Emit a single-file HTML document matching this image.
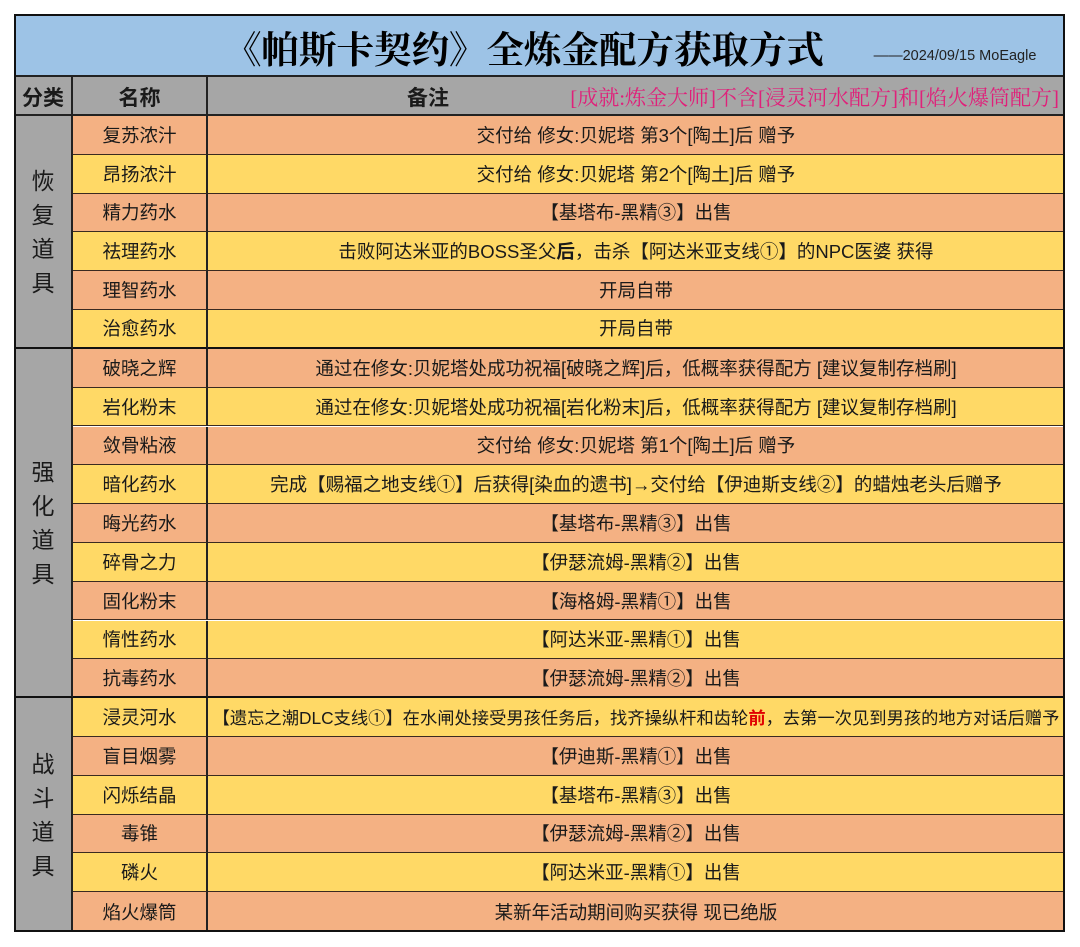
<!DOCTYPE html>
<html><head><meta charset="utf-8"><style>
body{margin:0;width:1080px;height:947px;background:#fff;position:relative;overflow:hidden;font-family:"Liberation Sans","Microsoft YaHei","Noto Sans CJK SC",sans-serif;}
.c{position:absolute;box-sizing:border-box;display:flex;align-items:center;justify-content:center;font-size:18.5px;color:#1a1a1a;white-space:nowrap;}
.n{font-size:18.5px}
.o{background:#F4B183}.y{background:#FFD966}
.frame{position:absolute;left:14px;top:14px;width:1051px;height:918px;border:2px solid #111;box-sizing:border-box;pointer-events:none}
.cat{font-size:23px;line-height:34px;white-space:normal;text-align:center;padding:0 17px}
</style></head><body>
<div class="c" style="left:15px;top:15px;width:1049px;height:62px;background:#9DC3E6;border-bottom:2px solid #222"></div>
<div class="c" style="left:224px;top:18px;width:620px;height:58px;font-family:'Liberation Serif','Noto Serif CJK SC',serif;font-weight:bold;font-size:37.5px;color:#000;justify-content:flex-start">《帕斯卡契约》全炼金配方获取方式</div>
<div class="c" style="left:865px;top:44px;width:180px;height:24px;font-size:14.5px;color:#222">——2024/09/15 MoEagle</div>
<div class="c" style="left:15px;top:77px;width:1049px;height:39px;background:#A6A6A6;border-bottom:2px solid #222"></div>
<div class="c" style="left:15px;top:77px;width:58px;height:39px;font-weight:bold;font-size:21px;border-right:2px solid #222">分类</div>
<div class="c" style="left:73px;top:77px;width:135px;height:39px;font-weight:bold;font-size:21px;border-right:2px solid #222">名称</div>
<div class="c" style="left:208px;top:77px;width:440px;height:39px;font-weight:bold;font-size:21px">备注</div>
<div class="c" style="left:500px;top:77px;width:559px;height:39px;font-size:21px;color:#E0207A;font-family:'Liberation Serif','Noto Serif CJK SC',serif;justify-content:flex-end">[成就:炼金大师]不含[浸灵河水配方]和[焰火爆筒配方]</div>
<div id="rows"></div>
<div class="c cat" style="left:15px;top:116px;width:58px;height:233px;background:#A6A6A6;border-right:2px solid #222;border-bottom:2px solid #111">恢复道具</div>
<div class="c cat" style="left:15px;top:349px;width:58px;height:349px;background:#A6A6A6;border-right:2px solid #222;border-bottom:2px solid #111">强化道具</div>
<div class="c cat" style="left:15px;top:698px;width:58px;height:233px;background:#A6A6A6;border-right:2px solid #222">战斗道具</div>
<div class="frame"></div>
<script>
var d=[
["复苏浓汁","交付给 修女:贝妮塔 第3个[陶土]后 赠予"],
["昂扬浓汁","交付给 修女:贝妮塔 第2个[陶土]后 赠予"],
["精力药水","【基塔布-黑精③】出售"],
["祛理药水","击败阿达米亚的BOSS圣父<b>后</b>，击杀【阿达米亚支线①】的NPC医婆 获得"],
["理智药水","开局自带"],
["治愈药水","开局自带"],
["破晓之辉","通过在修女:贝妮塔处成功祝福[破晓之辉]后，低概率获得配方 [建议复制存档刷]"],
["岩化粉末","通过在修女:贝妮塔处成功祝福[岩化粉末]后，低概率获得配方 [建议复制存档刷]"],
["敛骨粘液","交付给 修女:贝妮塔 第1个[陶土]后 赠予"],
["暗化药水","完成【赐福之地支线①】后获得[染血的遗书]→交付给【伊迪斯支线②】的蜡烛老头后赠予"],
["晦光药水","【基塔布-黑精③】出售"],
["碎骨之力","【伊瑟流姆-黑精②】出售"],
["固化粉末","【海格姆-黑精①】出售"],
["惰性药水","【阿达米亚-黑精①】出售"],
["抗毒药水","【伊瑟流姆-黑精②】出售"],
["浸灵河水","【遗忘之潮DLC支线①】在水闸处接受男孩任务后，找齐操纵杆和齿轮<b style='color:#e00000'>前</b>，去第一次见到男孩的地方对话后赠予"],
["盲目烟雾","【伊迪斯-黑精①】出售"],
["闪烁结晶","【基塔布-黑精③】出售"],
["毒锥","【伊瑟流姆-黑精②】出售"],
["磷火","【阿达米亚-黑精①】出售"],
["焰火爆筒","某新年活动期间购买获得 现已绝版"]];
var h='',H=815/21;
for(var i=0;i<21;i++){var t=116+i*H,cl=i%2?'y':'o';var bb=(i==5||i==14)?'2px solid #111':'1px solid #3a2a20';if(i==20)bb='none';
h+='<div class="c '+cl+'" style="left:73px;top:'+t.toFixed(1)+'px;width:135px;height:'+H.toFixed(1)+'px;border-right:2px solid #222;border-bottom:'+bb+'">'+d[i][0]+'</div>';
h+='<div class="c n '+cl+'" style="left:208px;top:'+t.toFixed(1)+'px;width:856px;height:'+H.toFixed(1)+'px;border-bottom:'+bb+(i==15?';font-size:17.3px':'')+'">'+d[i][1]+'</div>';}
document.getElementById('rows').innerHTML=h;
</script>
</body></html>
